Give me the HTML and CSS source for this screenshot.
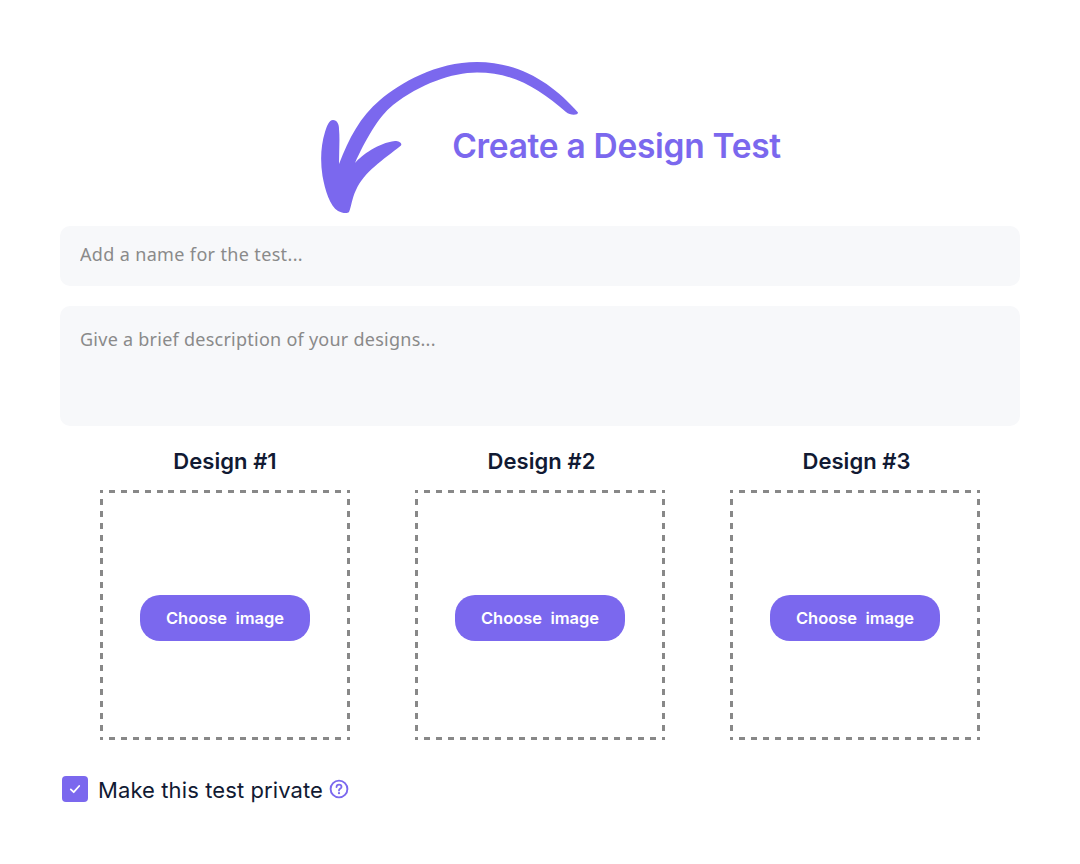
FILE: index.html
```html
<!DOCTYPE html>
<html lang="en">
<head>
<meta charset="utf-8">
<title>Create a Design Test</title>
<link rel="stylesheet" href="styles.css">
</head>
<body>
<main class="page">
  <header class="header">
    <svg class="arrow" width="270" height="160" viewBox="320 60 270 160" aria-hidden="true">
      <path class="arrow-shape" d="M578 112.5C578 115.5 570 115.5 566 112C540 90 515 72.500 477 72.500C452 72.500 420 84 393 105C378 117 365 141 355 163C362 155 378 143 395 141C399 141 402.5 143 401 145.5C383 160 364 172 356 190C352 198 351 208 349 212C347 214 342 213 338 211C330 206 325 190 322.5 176C320 160 321 145 325 132C327 126 329 120 333 120C337 120 339 124 339 129C340 140 339 152 339 164C349 138 360 117 380 100C400 83 436 62 477 62C520 62 553 84 578 112.5Z"/>
    </svg>
    <h1 class="title">Create a Design Test</h1>
  </header>
  <form class="form">
    <input class="field field-name" type="text" placeholder="Add a name for the test...">
    <textarea class="field field-desc" placeholder="Give a brief description of your designs..."></textarea>
    <div class="designs">
      <section class="design">
        <h2 class="design-title">Design #1</h2>
        <div class="drop"><button class="choose" type="button">Choose&nbsp; image</button></div>
      </section>
      <section class="design">
        <h2 class="design-title design-title-offset">Design #2</h2>
        <div class="drop"><button class="choose" type="button">Choose&nbsp; image</button></div>
      </section>
      <section class="design">
        <h2 class="design-title design-title-offset">Design #3</h2>
        <div class="drop"><button class="choose" type="button">Choose&nbsp; image</button></div>
      </section>
    </div>
    <div class="private">
      <span class="check">
        <svg width="14" height="14" viewBox="0 0 14 14" aria-hidden="true"><path d="M2.8 7.4L5.7 10.2L11.2 4" fill="none" stroke="#fff" stroke-width="1.8" stroke-linecap="round" stroke-linejoin="round"/></svg>
      </span>
      <span class="private-label">Make this test private</span>
      <svg class="help" width="20" height="20" viewBox="0 0 20 20" aria-hidden="true">
        <circle cx="10" cy="10" r="8.4" fill="none" stroke="#7B68EE" stroke-width="1.9"/>
        <path d="M7.5 8C7.6 6.5 8.7 5.6 10 5.6C11.4 5.6 12.5 6.6 12.5 7.9C12.5 9.6 10 9.6 10 11.5" fill="none" stroke="#7B68EE" stroke-width="1.8" stroke-linecap="round"/>
        <circle cx="10" cy="14.2" r="1.1" fill="#7B68EE"/>
      </svg>
    </div>
  </form>
</main>
</body>
</html>
```
FILE: styles.css
```css
* { box-sizing: border-box; }
body { margin: 0; background: #fff; font-family: "Inter", "Liberation Sans", sans-serif; color: #111a33; }
.page { width: 960px; margin: 0 auto; }
.header { position: relative; height: 226px; display: flex; justify-content: center; padding: 125px 0 0 153px; }
.arrow { position: absolute; left: 260px; top: 60px; }
.arrow-shape { fill: #7B68EE; }
.title { margin: 0; font-size: 33.5px; line-height: 42px; font-weight: 600; color: #7B68EE; letter-spacing: -0.3px; white-space: nowrap; }
.form { display: flex; flex-direction: column; }
.field { display: block; width: 100%; border: 0; border-radius: 10px; background: #f7f8fa; padding: 0 20px; font-family: "Noto Sans", sans-serif; font-size: 18px; letter-spacing: 0.35px; color: #111a33; outline: none; resize: none; }
.field::placeholder { color: #8a8a8a; opacity: 1; }
.field-name { height: 60px; padding-bottom: 4px; }
.field-desc { height: 120px; margin-top: 20px; padding-top: 22px; line-height: 22px; letter-spacing: 0.25px; }
.designs { display: flex; justify-content: center; padding-top: 20px; gap: 65px; }
.design { width: 250px; display: flex; flex-direction: column; align-items: center; }
.design-title { margin: 0 0 14px; font-size: 22px; line-height: 30px; font-weight: 600; letter-spacing: 0.05px; }
.design-title-offset { margin-left: 3px; }
.drop {
  width: 250px; height: 250px; padding-top: 6px;
  display: flex; align-items: center; justify-content: center;
  background:
    repeating-linear-gradient(to right, #888 0 3.12px, transparent 3.12px 9px, #888 9px 11.88px) top / 100% 3px no-repeat,
    repeating-linear-gradient(to right, #888 0 3.12px, transparent 3.12px 9px, #888 9px 11.88px) bottom / 100% 3px no-repeat,
    repeating-linear-gradient(to bottom, #888 0 3.12px, transparent 3.12px 9px, #888 9px 11.88px) left / 3px 100% no-repeat,
    repeating-linear-gradient(to bottom, #888 0 3.12px, transparent 3.12px 9px, #888 9px 11.88px) right / 3px 100% no-repeat;
}
.choose { width: 170px; height: 46px; border: 0; border-radius: 20px; background: #7B68EE; color: #fff; font-family: inherit; font-size: 16.5px; font-weight: 600; }
.private { display: flex; align-items: center; margin-top: 35px; padding-left: 2px; }
.check { width: 26px; height: 26px; border-radius: 4px; background: #7B68EE; display: flex; align-items: center; justify-content: center; }
.private-label { margin-left: 10px; padding-top: 2px; font-size: 22px; line-height: 26px; font-weight: 400; letter-spacing: 0.1px; }
.help { margin-left: 6px; }
```
